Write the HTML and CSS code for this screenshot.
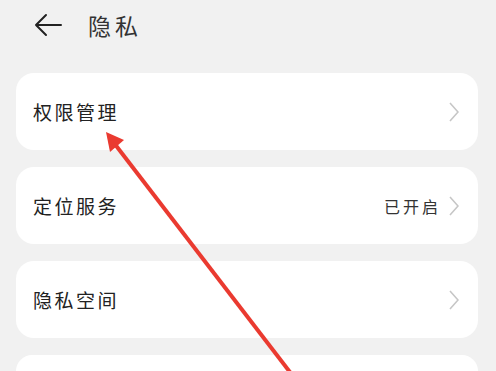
FILE: index.html
```html
<!DOCTYPE html>
<html lang="zh-CN">
<head>
  <meta charset="UTF-8" />
  <meta name="viewport" content="width=device-width, initial-scale=1.0"/>
  <title>隐私</title>
  <link rel="stylesheet" href="styles.css">
</head>
<body>

  <div class="topbar">
    <svg class="back" width="28" height="24" viewBox="0 0 28 24">
      <path d="M27 12H2M12 2L2 12l10 10" fill="none" stroke="#222" stroke-width="2" stroke-linecap="round" stroke-linejoin="round"/>
    </svg>
    <h1>隐私</h1>
  </div>

  <div class="list">
    <div class="card">
      <span class="label">权限管理</span>
      <span class="right"><svg class="chev" width="10" height="20" viewBox="0 0 10 20"><path d="M1 1l8 9-8 9" fill="none" stroke="#c6c6c6" stroke-width="1.6"/></svg></span>
    </div>
    <div class="card">
      <span class="label">定位服务</span>
      <span class="right"><span class="value">已开启</span><svg class="chev" width="10" height="20" viewBox="0 0 10 20"><path d="M1 1l8 9-8 9" fill="none" stroke="#c6c6c6" stroke-width="1.6"/></svg></span>
    </div>
    <div class="card">
      <span class="label">隐私空间</span>
      <span class="right"><svg class="chev" width="10" height="20" viewBox="0 0 10 20"><path d="M1 1l8 9-8 9" fill="none" stroke="#c6c6c6" stroke-width="1.6"/></svg></span>
    </div>
    <div class="card card-cut"></div>
  </div>

  <!-- red annotation arrow drawn over the list -->
  <svg class="pointer" width="496" height="371" viewBox="0 0 496 371">
    <line x1="296" y1="380" x2="114" y2="143" stroke="#ea3a30" stroke-width="4"/>
    <path d="M106 132L124 140L110 152Z" fill="#ea3a30"/>
  </svg>

</body>
</html>
```

FILE: styles.css
```css
* {
  box-sizing: border-box;
  font-family: 'Noto Sans CJK SC', 'Noto Sans', sans-serif;
}

body {
  margin: 0;
  background: #f1f1f1;
  color: #222;
  height: 371px;
  overflow: hidden;
  position: relative;
}

.topbar {
  display: flex;
  align-items: center;
  height: 50px;
  padding-left: 34px;
}

.back {
  display: block;
}

h1 {
  margin: 0 0 0 26px;
  font-size: 23px;
  font-weight: 400;
  letter-spacing: 4px;
  color: #333;
}

.list {
  display: flex;
  flex-direction: column;
  gap: 17px;
  margin-top: 23px;
  padding: 0 18px 0 16px;
}

.card {
  display: flex;
  align-items: center;
  justify-content: space-between;
  height: 77px;
  background: #fff;
  border-radius: 18px;
  padding: 0 19px 0 17px;
}

.card-cut {
  height: 16px;
  border-radius: 18px 18px 0 0;
}

.label {
  font-size: 19px;
  letter-spacing: 2.5px;
  color: #222;
}

.right {
  display: flex;
  align-items: center;
  gap: 8px;
}

.value {
  font-size: 16px;
  letter-spacing: 3px;
  color: #333;
}

.chev {
  display: block;
}

.pointer {
  position: absolute;
  left: 0;
  top: 0;
  pointer-events: none;
}
```
